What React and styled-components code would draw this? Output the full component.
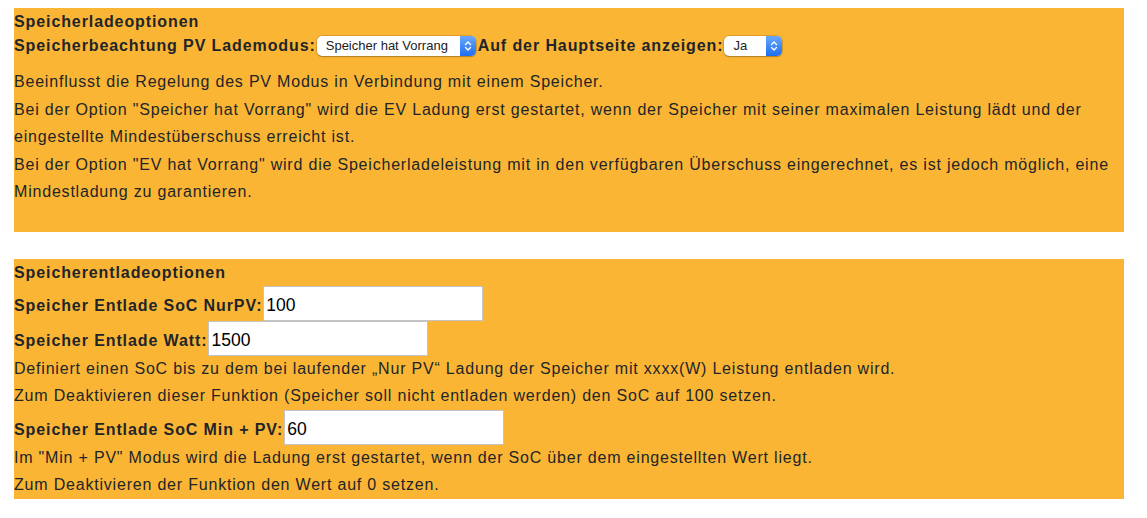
import React from "react";
import styled, { createGlobalStyle } from "styled-components";

const GlobalStyle = createGlobalStyle`
  body {
    margin: 0;
    background: #fff;
    font-family: "Liberation Sans", Arial, sans-serif;
    color: #212529;
  }
`;

const Page = styled.div`
  padding: 8px 23px 0 14px;
`;

const Panel = styled.section`
  background: #fbb534;
  font-size: 16px;
  padding-bottom: ${({ $bottom }) => $bottom || 0}px;
  margin-bottom: 27px;
`;

const Title = styled.div`
  font-weight: bold;
  letter-spacing: 0.9px;
  line-height: 27px;
`;

const Row = styled.div`
  display: flex;
  align-items: ${({ $center }) => ($center ? "center" : "baseline")};
  height: ${({ $h }) => $h}px;
`;

const Label = styled.label`
  font-weight: bold;
  letter-spacing: 0.9px;
  white-space: nowrap;
`;

const Text = styled.p`
  margin: ${({ $top }) => $top || 0}px 0 0 0;
  letter-spacing: 0.8px;
  line-height: 27.5px;
`;

const Input = styled.input`
  box-sizing: border-box;
  width: 220px;
  height: 35px;
  margin-left: 1px;
  border: 1px solid #c4c4c4;
  padding: 4px 2px 0;
  font-family: "Liberation Sans", Arial, sans-serif;
  font-size: 17.5px;
  color: #000;
  background: #fff;
  outline: none;
`;

const SelectWrap = styled.span`
  display: inline-flex;
  width: ${({ $w }) => $w}px;
  height: 20px;
  margin: 0 2px 0 1px;
  border-radius: 5px;
  background: #fff;
  box-shadow: 0 0 0 0.5px rgba(0, 0, 0, 0.25), 0 1px 1.5px rgba(0, 0, 0, 0.2);
  overflow: hidden;
`;

const NativeSelect = styled.select`
  appearance: none;
  -webkit-appearance: none;
  flex: 1;
  min-width: 0;
  border: none;
  background: transparent;
  padding: 0 0 0 9px;
  font-family: "Liberation Sans", Arial, sans-serif;
  font-size: 13px;
  color: #222;
  outline: none;
`;

const Stepper = styled.span`
  width: 16px;
  display: flex;
  align-items: center;
  justify-content: center;
  background: linear-gradient(#69a8fb, #1d6ef1);
`;

function Select({ width, value, options }) {
  return (
    <SelectWrap $w={width}>
      <NativeSelect defaultValue={value}>
        {options.map((o) => (
          <option key={o}>{o}</option>
        ))}
      </NativeSelect>
      <Stepper>
        <svg width="8" height="12" viewBox="0 0 8 12" fill="none" stroke="#fff" strokeWidth="1.4" strokeLinecap="round" strokeLinejoin="round">
          <path d="M1.5 4.5 4 2l2.5 2.5" />
          <path d="M1.5 7.5 4 10l2.5-2.5" />
        </svg>
      </Stepper>
    </SelectWrap>
  );
}

export default function App() {
  return (
    <>
      <GlobalStyle />
      <Page>
        <Panel $bottom={26}>
          <Title>Speicherladeoptionen</Title>
          <Row $center $h={21}>
            <Label>Speicherbeachtung PV Lademodus:</Label>
            <Select width={159} value="Speicher hat Vorrang" options={["Speicher hat Vorrang", "EV hat Vorrang"]} />
            <Label>Auf der Hauptseite anzeigen:</Label>
            <Select width={58} value="Ja" options={["Ja", "Nein"]} />
          </Row>
          <Text $top={12}>
            Beeinflusst die Regelung des PV Modus in Verbindung mit einem Speicher.
            <br />
            Bei der Option "Speicher hat Vorrang" wird die EV Ladung erst gestartet, wenn der Speicher mit seiner maximalen Leistung lädt und der eingestellte Mindestüberschuss erreicht ist.
            <br />
            Bei der Option "EV hat Vorrang" wird die Speicherladeleistung mit in den verfügbaren Überschuss eingerechnet, es ist jedoch möglich, eine Mindestladung zu garantieren.
          </Text>
        </Panel>

        <Panel>
          <Title>Speicherentladeoptionen</Title>
          <Row $h={35}>
            <Label>Speicher Entlade SoC NurPV:</Label>
            <Input type="text" defaultValue="100" />
          </Row>
          <Row $h={34}>
            <Label>Speicher Entlade Watt:</Label>
            <Input type="text" defaultValue="1500" />
          </Row>
          <Text>
            Definiert einen SoC bis zu dem bei laufender „Nur PV“ Ladung der Speicher mit xxxx(W) Leistung entladen wird.
            <br />
            Zum Deaktivieren dieser Funktion (Speicher soll nicht entladen werden) den SoC auf 100 setzen.
          </Text>
          <Row $h={34}>
            <Label>Speicher Entlade SoC Min + PV:</Label>
            <Input type="text" defaultValue="60" />
          </Row>
          <Text>
            Im "Min + PV" Modus wird die Ladung erst gestartet, wenn der SoC über dem eingestellten Wert liegt.
            <br />
            Zum Deaktivieren der Funktion den Wert auf 0 setzen.
          </Text>
        </Panel>
      </Page>
    </>
  );
}
